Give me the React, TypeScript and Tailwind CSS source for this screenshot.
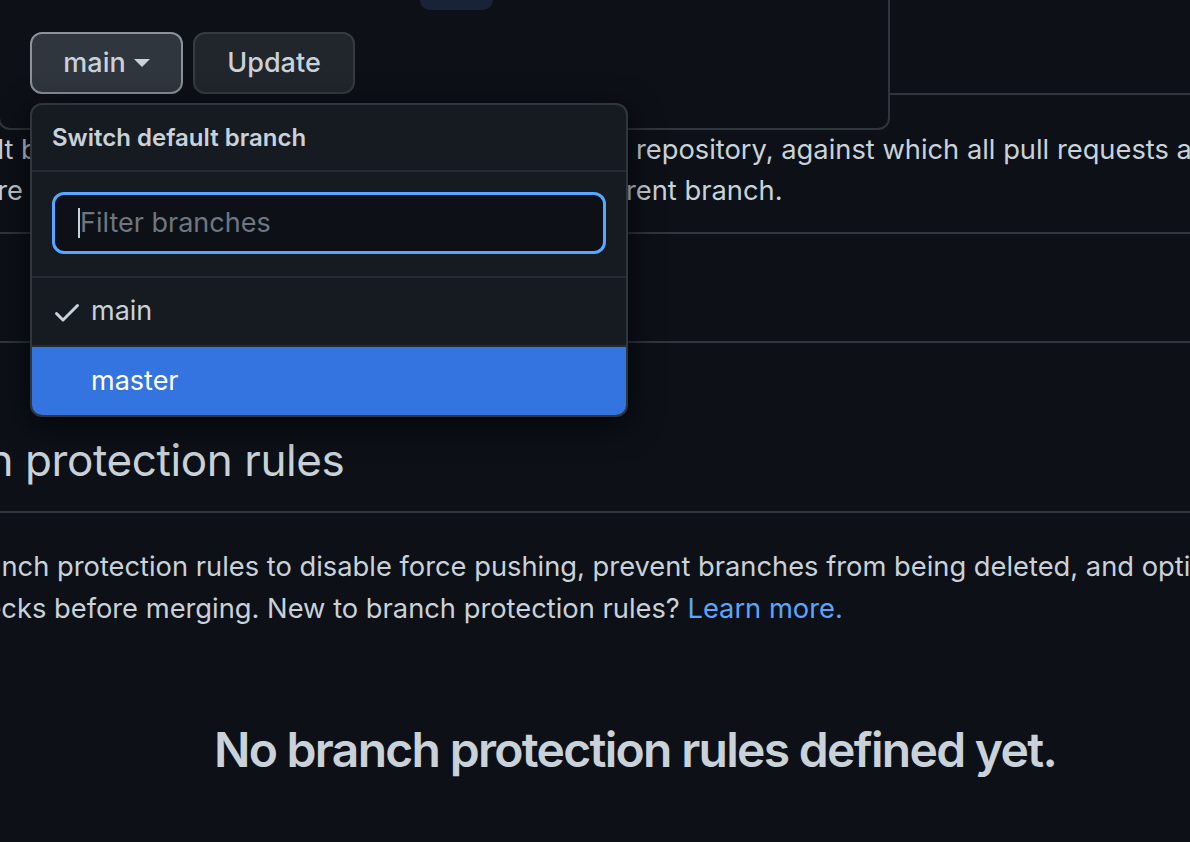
import React from "react";

function CheckIcon() {
  return (
    <svg width="32" height="32" viewBox="0 0 16 16" fill="currentColor" className="shrink-0">
      <path d="M13.78 4.22a.75.75 0 0 1 0 1.06l-7.25 7.25a.75.75 0 0 1-1.06 0L2.22 9.28a.751.751 0 0 1 .018-1.042.751.751 0 0 1 1.042-.018L6 10.94l6.72-6.72a.75.75 0 0 1 1.06 0Z" />
    </svg>
  );
}

export default function App() {
  return (
    <div className="relative h-[842px] w-[1190px] overflow-hidden bg-[#0d1117] font-['Inter',sans-serif] text-[#c9d1d9]">
      <div className="h-[95px] border-b-2 border-[#30363d]" />
      <div className="border-b-2 border-[#30363d] pt-[34px] pb-[21px] text-[27.3px] leading-[41px] whitespace-nowrap">
        <div className="flex pl-[21px]">
          <span className="flex w-0 justify-end">The default&nbsp;</span>
          <span className="w-[615px] shrink-0 overflow-hidden">branch is considered the “base” branch in your</span>
          <span>repository, against which all pull requests and code commits</span>
        </div>
        <div className="flex pl-[23px]">
          <span className="flex w-0 justify-end">are</span>
          <span className="w-[603px] shrink-0 overflow-hidden">&nbsp;automatically made, unless you specify a diffe</span>
          <span>rent branch.</span>
        </div>
      </div>
      <div className="h-[109px] border-b-2 border-[#30363d]" />
      <div className="border-b-2 border-[#30363d] pt-[87px] pb-[21px] text-[44px] leading-[60px] tracking-[-0.4px] whitespace-nowrap">
        <div className="flex pl-[25px]">
          <span className="flex w-0 justify-end">Branch&nbsp;</span>
          <span>protection rules</span>
        </div>
      </div>
      <div className="pt-[33px] text-[27.3px] leading-[42px] whitespace-nowrap">
        <div className="flex pl-[57px]">
          <span className="flex w-0 justify-end">Define branch&nbsp;</span>
          <span>protection rules to disable force pushing, prevent branches from being deleted, and optionally require status</span>
        </div>
        <div className="flex pl-[54px]">
          <span className="flex w-0 justify-end">checks&nbsp;</span>
          <span>
            before merging. New to branch protection rules? <span className="text-[#58a6ff]">Learn more.</span>
          </span>
        </div>
      </div>
      <div className="mt-[90px] pl-[80px] text-center text-[48px] font-semibold leading-[60px] tracking-[-1.7px] whitespace-nowrap">
        No branch protection rules defined yet.
      </div>

      {/* Dialog card overlay */}
      <div className="absolute left-[-2px] top-[-40px] w-[892px] rounded-[12px] border-2 border-[#30363d] bg-[#0d1117] pl-[30px] pb-[34px]">
        <div className="flex h-[48px] items-end">
          <span className="mb-[4px] w-[390px] shrink-0 overflow-hidden whitespace-nowrap text-[27px] leading-[42px]">Applies to any copy</span>
          <span className="h-[40px] w-[73px] rounded-[10px] bg-[#192338]" />
        </div>
        <div className="mt-[22px] flex gap-[10px]">
          <button className="flex h-[62px] w-[153px] items-center justify-center gap-[8px] rounded-[12px] border-2 border-[#8b929b] bg-[#30363d] text-[27px] font-medium text-[#c9d1d9]">
            main
            <svg width="16" height="8" viewBox="0 0 16 8" fill="currentColor">
              <polygon points="0,0 16,0 8,8" />
            </svg>
          </button>
          <button className="h-[62px] w-[162px] rounded-[12px] border-2 border-[#363b42] bg-[#21262d] text-[27px] font-medium text-[#c9d1d9]">
            Update
          </button>
        </div>
      </div>

      {/* Branch select menu */}
      <div className="absolute left-[30px] top-[103px] w-[598px] overflow-hidden rounded-[12px] border-2 border-[#30363d] bg-[#161b22] shadow-[0_8px_32px_rgba(1,4,9,0.85)]">
        <div className="flex h-[67px] items-center border-b-2 border-[#262b33] pl-[20px] text-[24px] font-semibold">
          Switch default branch
        </div>
        <div className="border-b-2 border-[#262b33] px-[20px] pt-[20px] pb-[22px]">
          <div className="flex h-[62px] items-center rounded-[12px] border-[3px] border-[#58a6ff] bg-[#0d1117] pl-[23px] text-[27px] text-[#6e7681]">
            <span className="h-[30px] w-[2px] bg-[#c9d1d9]" />
            Filter branches
          </div>
        </div>
        <div className="flex h-[69px] items-center gap-[8px] border-b-2 border-[#262b33] pl-[19px] text-[27px]">
          <CheckIcon />
          main
        </div>
        <div className="flex h-[68px] items-center gap-[8px] bg-[#3474e0] pl-[19px] text-[27px] text-white">
          <span className="w-[32px]" />
          master
        </div>
      </div>
    </div>
  );
}
